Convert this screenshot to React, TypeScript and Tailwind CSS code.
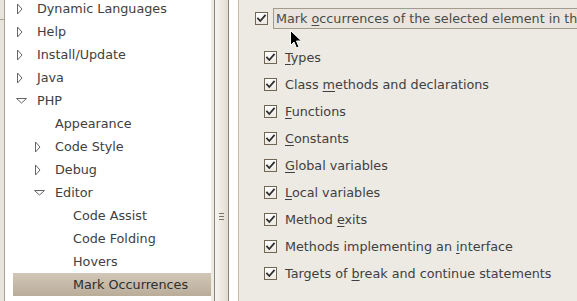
import React from "react";

type Node = { label: string; level: 0 | 1 | 2; exp?: "open" | "closed"; selected?: boolean };

const tree: Node[] = [
  { label: "Dynamic Languages", level: 0, exp: "closed" },
  { label: "Help", level: 0, exp: "closed" },
  { label: "Install/Update", level: 0, exp: "closed" },
  { label: "Java", level: 0, exp: "closed" },
  { label: "PHP", level: 0, exp: "open" },
  { label: "Appearance", level: 1 },
  { label: "Code Style", level: 1, exp: "closed" },
  { label: "Debug", level: 1, exp: "closed" },
  { label: "Editor", level: 1, exp: "open" },
  { label: "Code Assist", level: 2 },
  { label: "Code Folding", level: 2 },
  { label: "Hovers", level: 2 },
  { label: "Mark Occurrences", level: 2, selected: true },
];

const levelPad = ["pl-0", "pl-[18px]", "pl-[36px]"];

function Expander({ exp }: { exp?: "open" | "closed" }) {
  if (!exp) return <span className="w-[12px] h-[12px]" />;
  return (
    <svg width="12" height="12" viewBox="0 0 12 12" className="block">
      {exp === "closed" ? (
        <path d="M1.5 1 L6 6 L1.5 11 Z" fill="#fff" stroke="#666" strokeWidth="1" strokeLinejoin="miter" />
      ) : (
        <path d="M0.5 3.5 L10.5 3.5 L5.5 8 Z" fill="#fff" stroke="#666" strokeWidth="1" strokeLinejoin="miter" />
      )}
    </svg>
  );
}

function Check() {
  return (
    <span className="w-[13px] h-[13px] border border-[#6f6654] bg-gradient-to-b from-[#ffffff] to-[#ece8e1] flex items-center justify-center shrink-0">
      <svg width="11" height="11" viewBox="0 0 11 11" className="block">
        <path d="M2 5.5 L4.3 8 L9 2.5" fill="none" stroke="#2e2e2e" strokeWidth="1.8" strokeLinecap="square" />
      </svg>
    </span>
  );
}

function U({ children }: { children: React.ReactNode }) {
  return <span className="underline underline-offset-[2px] decoration-[1px]">{children}</span>;
}

const items: React.ReactNode[] = [
  <><U>T</U>ypes</>,
  <>Class <U>m</U>ethods and declarations</>,
  <><U>F</U>unctions</>,
  <><U>C</U>onstants</>,
  <><U>G</U>lobal variables</>,
  <><U>L</U>ocal variables</>,
  <>Method <U>e</U>xits</>,
  <>Methods implementing an <U>i</U>nterface</>,
  <>Targets of <U>b</U>reak and continue statements</>,
];

export default function App() {
  return (
    <div
      className="w-[577px] h-[301px] flex overflow-hidden text-[12.75px] text-[#404040] bg-[#edeae4]"
      style={{ fontFamily: '"DejaVu Sans", "Liberation Sans", sans-serif' }}
    >
      {/* left frame strip */}
      <div className="w-[5px] shrink-0 bg-[#e8e5df] border-r border-[#aaa498] flex flex-col">
        <div className="h-[20px] border-b border-[#a8a296]" />
      </div>

      {/* tree */}
      <div className="w-[206px] shrink-0 bg-white overflow-hidden">
        <div className="mt-[-3px] pl-[8px] flex flex-col">
          {tree.map((n) => (
            <div
              key={n.label}
              className={
                "h-[23px] flex items-center " +
                (n.selected ? "bg-gradient-to-b from-[#d2c7b8] to-[#b9ac99] text-[#2e2e2e]" : "")
              }
            >
              <div className={"flex items-center " + levelPad[n.level]}>
                <div className="w-[24px] pl-[3px] flex items-center">
                  <Expander exp={n.exp} />
                </div>
                <span className="whitespace-nowrap">{n.label}</span>
              </div>
            </div>
          ))}
        </div>
      </div>

      {/* sash */}
      <div className="w-[3px] shrink-0 bg-[#efebe5]" />
      <div className="w-[15px] shrink-0 border-x border-[#8a8578] bg-gradient-to-r from-[#f7f5f1] to-[#e2dcd2] flex flex-col items-center">
        <div className="flex flex-col gap-[2px] mt-[213px]">
          <div className="w-[5px] h-px bg-[#7a7468]" />
          <div className="w-[5px] h-px bg-[#7a7468]" />
          <div className="w-[5px] h-px bg-[#7a7468]" />
        </div>
      </div>
      <div className="w-[10px] shrink-0 bg-white border-r border-[#c9bba4]" />

      {/* right panel */}
      <div className="flex-1 relative bg-[#edeae4] overflow-hidden">
        <div className="mt-[8px] h-[21px] flex items-center pl-[16px] gap-[5px]">
          <Check />
          <div className="h-[21px] flex-1 border border-[#a39c8c] bg-[#e9e5de] pl-[2px] flex items-center whitespace-nowrap text-[#4a4a4a] min-w-[320px]">
            <span>
              Mark <U>o</U>ccurrences of the selected element in the file
            </span>
          </div>
        </div>
        <div className="pt-[15px] pl-[25px] flex flex-col">
          {items.map((it, i) => (
            <div key={i} className="h-[27px] flex items-center gap-[8px] whitespace-nowrap">
              <Check />
              <span>{it}</span>
            </div>
          ))}
        </div>

        {/* mouse cursor */}
        <svg className="absolute left-[51px] top-[30px]" width="13" height="20" viewBox="0 0 13 20">
          <path
            d="M0.5 0.5 L0.5 15.5 L4 12 L6.5 18 L9 17 L6.5 11 L11.5 11 Z"
            fill="#000"
            stroke="#fff"
            strokeWidth="1"
            strokeLinejoin="miter"
          />
        </svg>
      </div>
    </div>
  );
}
